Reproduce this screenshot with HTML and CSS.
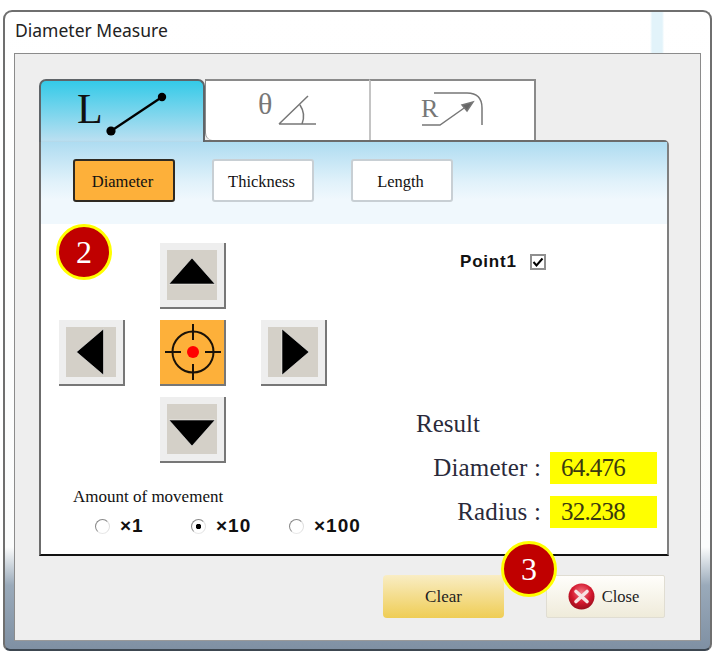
FILE: index.html
```html
<!DOCTYPE html>
<html lang="en">
<head>
<meta charset="utf-8">
<title>Diameter Measure</title>
<link rel="stylesheet" href="styles.css">
</head>
<body>
<div class="window">
  <div class="titlebar">Diameter Measure</div>
  <div class="client">
    <div class="tabs">
      <div class="tab tab-active">
        <span class="tab-letter tab-letter-l">L</span>
        <svg class="tab-line" width="66" height="46" viewBox="0 0 66 46"><line x1="5" y1="40" x2="56" y2="6" stroke="#000" stroke-width="2.2"/><circle cx="5" cy="40" r="4.6"/><circle cx="56" cy="6" r="4.2"/></svg>
      </div>
      <div class="tab tab-off">
        <span class="tab-letter tab-letter-t">θ</span>
        <svg width="40" height="32" viewBox="0 0 40 32" fill="none" stroke="#777" stroke-width="1.5"><path d="M2 29H39M2 29L31 1M23 10Q29 19 25 29"/></svg>
      </div>
      <div class="tab tab-off tab-last">
        <span class="tab-letter tab-letter-r">R</span>
        <svg class="tab-r" width="64" height="38" viewBox="0 0 64 38" fill="none" stroke="#777" stroke-width="1.5"><path d="M1 34H19L46 15"/><path d="M41 14L52 11L46 20Z" fill="#666"/><path d="M13 2H46Q61 2 61 17V34"/></svg>
      </div>
    </div>
    <div class="panel">
      <div class="toolbar">
        <div class="mode mode-on">Diameter</div>
        <div class="mode">Thickness</div>
        <div class="mode">Length</div>
      </div>
      <div class="panel-body">
        <div class="badge badge-two">2</div>
        <div class="left">
          <div class="pad">
            <div class="arrow arrow-up"><span class="arrow-in"><svg width="50" height="50" viewBox="0 0 50 50"><path d="M25 8L48 34H2Z" fill="#000" stroke="#fff" stroke-opacity=".5"/></svg></span></div>
            <div class="arrow arrow-left"><span class="arrow-in"><svg width="50" height="50" viewBox="0 0 50 50"><path d="M10.5 25L37.5 2V48Z" fill="#000" stroke="#fff" stroke-opacity=".5"/></svg></span></div>
            <div class="arrow arrow-center"><svg class="crosshair" width="60" height="60" viewBox="0 0 60 60" fill="none" stroke="#1a1208" stroke-width="2"><circle cx="30" cy="30" r="20.5"/><path d="M30 2V18M30 42V58M2 30H18M42 30H58"/><circle cx="30" cy="30" r="6" fill="#f00" stroke="none"/></svg></div>
            <div class="arrow arrow-right"><span class="arrow-in"><svg width="50" height="50" viewBox="0 0 50 50"><path d="M41 25L14 2V48Z" fill="#000" stroke="#fff" stroke-opacity=".5"/></svg></span></div>
            <div class="arrow arrow-down"><span class="arrow-in"><svg width="50" height="50" viewBox="0 0 50 50"><path d="M25 42L48 16H2Z" fill="#000" stroke="#fff" stroke-opacity=".5"/></svg></span></div>
          </div>
          <div class="amount">Amount of movement</div>
          <div class="radios">
            <div class="radio-item radio-a"><span class="radio"></span><span>×1</span></div>
            <div class="radio-item radio-b"><span class="radio radio-on"></span><span>×10</span></div>
            <div class="radio-item"><span class="radio"></span><span>×100</span></div>
          </div>
        </div>
        <div class="right">
          <div class="point"><span>Point1</span>
            <svg class="check" width="16" height="16" viewBox="0 0 16 16"><rect x="1" y="1" width="14" height="14" fill="#fff" stroke="#8f8f8f" stroke-width="2"/><path d="M3.5 8L6.5 11.5L12.5 4.5" fill="none" stroke="#000" stroke-width="2"/></svg>
          </div>
          <div class="result-title">Result</div>
          <div class="result-row"><span class="result-label">Diameter :</span><span class="result-value">64.476</span></div>
          <div class="result-row"><span class="result-label">Radius :</span><span class="result-value">32.238</span></div>
        </div>
      </div>
    </div>
    <div class="footer">
      <div class="badge badge-three">3</div>
      <div class="btn btn-clear">Clear</div>
      <div class="btn btn-close">
        <svg width="27" height="27" viewBox="0 0 27 27"><defs><radialGradient id="redball" cx=".5" cy=".35" r=".7"><stop offset="0" stop-color="#f27a86"/><stop offset=".55" stop-color="#d3172d"/><stop offset="1" stop-color="#8e0c18"/></radialGradient></defs><circle cx="13.5" cy="13.5" r="13" fill="url(#redball)"/><path d="M8 8.5L19 18.5M19 8.5L8 18.5" stroke="#f6e3e3" stroke-width="3.6" stroke-linecap="round"/></svg>
        <span>Close</span>
      </div>
    </div>
  </div>
</div>
</body>
</html>
```
FILE: styles.css
```css
* { box-sizing: border-box; }
html, body { margin: 0; padding: 0; }
body { width: 719px; height: 662px; background: #fff; overflow: hidden; }

.window {
  width: 709px;
  height: 641px;
  margin: 10px 0 0 3px;
  padding: 0 9px 8px 9px;
  border: 2px solid #6f6f6f;
  border-bottom-color: #3c4650;
  border-radius: 9px 9px 7px 7px;
  background:
    linear-gradient(90deg, transparent 91.5%, #e2f3fa 91.8%, #e2f3fa 93.2%, transparent 93.5%) top / 100% 42px no-repeat,
    linear-gradient(#fff 0, #fbfcfc 84%, #9aaaba 90%, #7f90a3 100%);
  display: flex;
  flex-direction: column;
}

.titlebar {
  height: 41px;
  flex: none;
  padding: 8px 0 0 1px;
  font: 17.5px/20px "Noto Sans", "Open Sans", sans-serif;
  color: #222;
}

.client {
  flex: 1;
  position: relative;
  border: 1.5px solid #8b8b8b;
  border-bottom-color: #999;
  background: #eee;
  padding: 25px 0 0 24px;
}

.tabs { display: flex; height: 61px; }

.tab {
  width: 164px;
  height: 63px;
  display: flex;
  align-items: flex-start;
  position: relative;
  background: #fff;
}

.tab-active {
  width: 166px;
  z-index: 2;
  border: 2px solid #5f6468;
  border-bottom: 0;
  border-radius: 7px 7px 0 0;
  background: linear-gradient(#34cae8, #b9dff1 97%, #b3d7e8);
  padding: 5px 0 0 36px;
}

.tab-off {
  height: 61px;
  border: 2px solid #8a8a8a;
  border-left-width: 1px;
  border-right: 0;
  border-bottom: 0;
  gap: 5px;
  padding: 14px 0 0 52px;
}
.tab-active + .tab-off { border-radius: 0 0 0 7px; }
.tab-last { width: 167px; border-right: 2px solid #8a8a8a; border-left: 2px solid #c4c4c4; padding: 10px 0 0 50px; gap: 0; }

.tab-letter { font-family: "Liberation Serif", serif; line-height: 1; }
.tab-letter-l { font-size: 42px; color: #111; margin-top: 2px; }
.tab-letter-t { font-size: 30px; color: #777; margin-top: -6px; }
.tab-letter-r { font-size: 26px; color: #777; margin-top: 5px; }
.tab-line { margin: 5px 0 0 3px; }
.tab-r { margin-left: -17px; }

.panel {
  width: 630px;
  height: 416px;
  border: 2px solid #6c6c6c;
  border-right-color: #7f7f7f;
  border-bottom-color: #111;
  border-radius: 0 5px 0 0;
  background: #fff;
  display: flex;
  flex-direction: column;
}

.toolbar {
  height: 82px;
  flex: none;
  display: flex;
  gap: 37px;
  padding: 17px 0 0 32px;
  background: linear-gradient(#aedcf1, #e0f1fa 48%, #f0f8fd 70%);
}

.mode {
  width: 102px;
  height: 43px;
  border: 2px solid #c8cfd4;
  border-radius: 3px;
  background: #fff;
  padding-right: 3px;
  font: 16.5px/41px "Liberation Serif", serif;
  text-align: center;
  color: #111;
}
.mode-on { background: #fdb03a; border-color: #2f2a22; }

.panel-body { flex: 1; display: flex; position: relative; }

.left { width: 356px; flex: none; padding: 19px 0 0 18px; }

.pad {
  display: grid;
  grid-template-columns: repeat(3, 66px);
  grid-template-rows: repeat(3, 66px);
  column-gap: 35px;
  row-gap: 11px;
}

.arrow {
  background: #eee;
  border-right: 2px solid #777;
  border-bottom: 2px solid #777;
  display: flex;
  align-items: center;
  justify-content: center;
}
.arrow-in { width: 50px; height: 50px; background: #d4d0c8; display: block; }
.arrow-in svg { display: block; }
.arrow-up { grid-column: 2; grid-row: 1; }
.arrow-left { grid-column: 1; grid-row: 2; }
.arrow-center { grid-column: 2; grid-row: 2; background: #fdb03a; }
.arrow-right { grid-column: 3; grid-row: 2; }
.arrow-down { grid-column: 2; grid-row: 3; }
.crosshair { margin-left: 2px; }

.amount {
  margin: 24px 0 0 14px;
  font: 17px/20px "Liberation Serif", serif;
  color: #111;
}

.radios { display: flex; margin: 9px 0 0 36px; }
.radio-item {
  display: flex;
  align-items: center;
  gap: 10px;
  font: bold 19px/20px "Liberation Sans", sans-serif;
  color: #111;
  letter-spacing: 1px;
}
.radio-a { width: 96px; }
.radio-b { width: 98px; }
.radio {
  width: 15px;
  height: 15px;
  border-radius: 50%;
  border: 1.5px solid;
  border-color: #888 #e0e0e0 #e8e8e8 #888;
  background: #fff;
  display: block;
  flex: none;
}
.radio-on { background: radial-gradient(circle, #000 0 2.5px, #fff 3px); }

.right { flex: 1; padding: 29px 0 0 0; }

.point {
  display: flex;
  align-items: center;
  gap: 13px;
  margin-left: 63px;
  height: 18px;
  font: bold 17px/18px "Liberation Sans", sans-serif;
  letter-spacing: .8px;
  color: #111;
}
.check { flex: none; }

.result-title {
  margin: 136px 0 0 19px;
  font: 25px/34px "Liberation Serif", serif;
  color: #2a2a3a;
}

.result-row {
  display: flex;
  justify-content: flex-end;
  align-items: center;
  gap: 9px;
  height: 32px;
  margin: 11px 10px 0 0;
  font: 25px/32px "Liberation Serif", serif;
  letter-spacing: .15px;
  color: #2a2a3a;
}
.result-row + .result-row { margin-top: 12px; }
.result-value {
  width: 107px;
  height: 32px;
  background: #ff0;
  padding-left: 11px;
  letter-spacing: -.8px;
  color: #3a3a10;
}

.footer { display: flex; gap: 42px; margin: 19px 0 0 344px; }

.btn {
  width: 121px;
  height: 43px;
  font: 17px/43px "Liberation Serif", serif;
  color: #222;
  text-align: center;
  display: flex;
  align-items: center;
  justify-content: center;
}
.btn-clear { background: linear-gradient(#f9edc4, #efcd55); border-radius: 4px; }
.btn-close {
  width: 119px;
  gap: 7px;
  padding-right: 4px;
  font-size: 16.5px;
  background: linear-gradient(#fffefb, #efebda);
  border: 1px solid #e0ddd2;
  border-radius: 2px;
}

.badge {
  position: absolute;
  width: 56px;
  height: 56px;
  border-radius: 50%;
  border: 3px solid #ff0;
  background: #c00000;
  color: #fff;
  font: 32px/50px "Liberation Serif", serif;
  text-align: center;
  z-index: 5;
}
.badge-two { left: 15px; top: 0; }
.badge-three { left: 486px; top: 487px; }
```
